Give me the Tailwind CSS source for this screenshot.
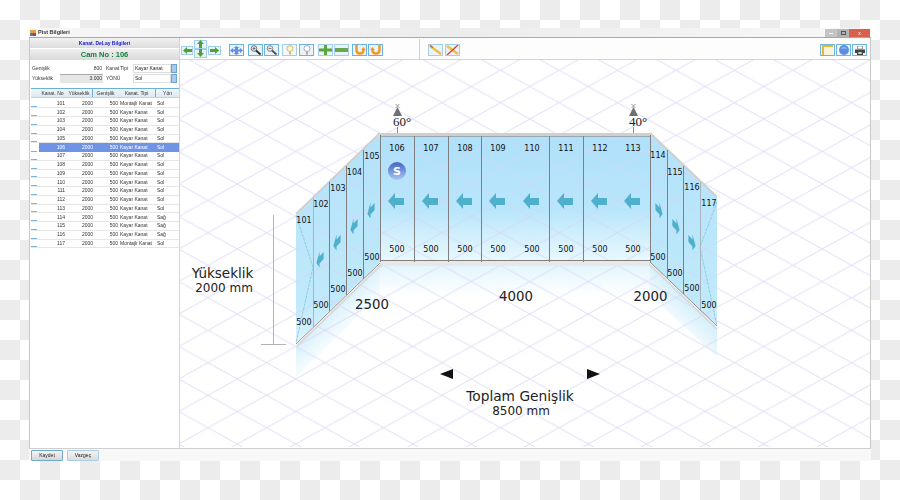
<!DOCTYPE html>
<html lang="en">
  <head>
    <meta charset="UTF-8" />
    <title>Pist Bilgileri</title>
    <script src="https://cdn.jsdelivr.net/npm/@tailwindcss/browser@4"></script>
  </head>
  <body class="w-[900px] h-[500px] overflow-hidden bg-[conic-gradient(#ececec_25%,#fff_0_50%,#ececec_0_75%,#fff_0)] bg-[length:40px_40px] font-['Liberation_Sans',sans-serif]">
    <div class="pt-[28px] pl-[29px]">
      <div class="w-[842px] h-[433px] flex flex-col">
        <!-- title bar -->
        <div class="h-[10px] shrink-0 flex items-center justify-between bg-gradient-to-r from-[#f7f7f7] via-[#ececec] to-[#f8f8f8] border-b border-[#a9a9a9]">
          <div class="flex items-center gap-[2px] pl-[1px] blur-[0.3px]">
            <span class="w-[6px] h-[6px] bg-[conic-gradient(#e5a13a_25%,#c0392b_0_50%,#3b7fc4_0_75%,#e5a13a_0)]"></span>
            <span class="text-[5.5px] font-bold leading-none text-[#333]">Pist Bilgileri</span>
          </div>
          <div class="flex h-[8px] self-start mt-[1px] mr-[1px] blur-[0.3px]">
            <span class="w-[12px] bg-[#c4c4c4] flex items-center justify-center"><span class="w-[4px] h-[1px] bg-white"></span></span>
            <span class="w-[12px] bg-[#b4b4b4] flex items-center justify-center"><span class="w-[5px] h-[4px] border border-[#555]"></span></span>
            <span class="w-[21px] bg-[#d8604c] flex items-center justify-center text-[5px] leading-none text-white">x</span>
          </div>
        </div>
        <div class="flex-1 min-h-0 flex bg-white border-x border-[#c9c9c9]">
          <!-- left panel -->
          <div class="w-[150px] shrink-0 border-r border-[#d4d4d4] blur-[0.35px]">
            <div class="h-[10px] bg-gradient-to-b from-[#f2f2f2] to-[#dcdcdc] flex items-center justify-center text-[5px] font-bold text-[#1a1ad0] leading-none">Kanat. DeLay Bilgileri</div>
            <div class="h-[11px] mt-[1px] bg-gradient-to-b from-[#f0f0f0] to-[#d9d9d9] flex items-center justify-center text-[7.5px] font-bold text-[#0f7f3c] leading-none">Cam No : 106</div>
            <div class="mt-[3px] pl-[2px] text-[5px] leading-none text-[#333]">
              <div class="flex items-center h-[10px]">
                <span class="w-[28px]">Genişlik</span>
                <span class="w-[43px] text-right pr-[1px]">800</span>
                <span class="ml-[3px] w-[27px]">Kanat Tipi</span>
                <span class="w-[38px] h-[9px] flex items-center bg-white border border-[#ddd] pl-[1px] text-[#222]">Kayar Kanat</span>
                <span class="w-[6px] h-[9px] bg-[#a9cbe8] border border-[#6da4d2]"></span>
              </div>
              <div class="flex items-center h-[10px]">
                <span class="w-[28px]">Yükseklik</span>
                <span class="w-[43px] h-[9px] flex items-center justify-end pr-[1px] bg-[#e6e6e6] border-t border-[#aaa]">3.000</span>
                <span class="ml-[3px] w-[27px]">YÖNÜ</span>
                <span class="w-[38px] h-[9px] flex items-center bg-white border border-[#ddd] pl-[1px] text-[#222]">Sol</span>
                <span class="w-[6px] h-[9px] bg-[#a9cbe8] border border-[#6da4d2]"></span>
              </div>
            </div>
            <div class="mt-[5px] ml-[1px] w-[148px] text-[5px] leading-none text-[#333]">
              <div class="flex h-[10px] items-center bg-gradient-to-b from-[#eef5fa] to-[#dde9f2] border-t border-[#6fb0d8] border-b border-b-[#bcd5e6]">
                <span class="w-[8px]"></span>
                <span class="w-[27px] text-center">Kanat. No</span>
                <span class="w-[27px] text-center border-r border-[#6fb0d8] h-full leading-[8px]">Yükseklik</span>
                <span class="w-[25px] text-center">Genişlik</span>
                <span class="w-[38px] text-center border-r border-[#6fb0d8] h-full leading-[8px]">Kanat. Tipi</span>
                <span class="w-[23px] text-center">Yön</span>
              </div>
              <div id="rows" class="mt-[1.5px]"></div>
            </div>
          </div>
          <!-- right side -->
          <div class="flex-1 min-w-0 flex flex-col">
            <div class="h-[22px] shrink-0 flex items-start border-b border-[#d4d4d4] bg-[#fdfdfd] blur-[0.3px]">
              <div class="flex items-center ml-[1px] h-full">
                <button class="w-[12px] h-[9px] mt-[4px] border border-[#a5cfe8] bg-[#e8f2f8] flex items-center justify-center"><svg width="9" height="7" viewBox="0 0 9 7"><path d="M0 3.500 4 0v2h5v3H4v2z" fill="#4da23a"/></svg></button>
                <div class="flex flex-col ml-[1px] mr-[1px]">
                  <button class="w-[13px] h-[9px] border border-[#a5cfe8] bg-[#e8f2f8] flex items-center justify-center"><svg width="7" height="8" viewBox="0 0 7 8"><path d="M3.500 0 7 4H5v4H2V4H0z" fill="#4da23a"/></svg></button>
                  <button class="w-[13px] h-[9px] border border-[#a5cfe8] bg-[#e8f2f8] flex items-center justify-center"><svg width="7" height="8" viewBox="0 0 7 8"><path d="M3.500 8 7 4H5V0H2v4H0z" fill="#4da23a"/></svg></button>
                </div>
                <button class="w-[13px] h-[9px] mt-[4px] border border-[#a5cfe8] bg-[#e8f2f8] flex items-center justify-center"><svg width="9" height="7" viewBox="0 0 9 7"><path d="M9 3.500 5 0v2H0v3h5v2z" fill="#4da23a"/></svg></button>
              </div>
              <div class="flex gap-[3px] ml-[8px] mt-[6px]">
                <button class="w-[15px] h-[12px] border border-[#6db3dc] bg-[#eaf3f9] flex items-center justify-center"><svg width="13" height="9" viewBox="0 0 13 9"><path d="M0 4.500 3 2v1.500h2V2L3.500 2 6.500 0 9.500 2H8v1.500h2V2l3 2.500L10 7V5.500H8V7h1.500l-3 2-3-2H5V5.500H3V7z" fill="#5f8fe0"/></svg></button>
              </div>
              <div class="flex gap-[1px] ml-[4px] mt-[6px]">
                <button class="w-[15px] h-[12px] border border-[#6db3dc] bg-[#eaf3f9] flex items-center justify-center"><svg width="12" height="10" viewBox="0 0 12 10"><circle cx="4" cy="3.500" r="2.800" fill="#dfe8ee" stroke="#777"/><path d="M6 5.500 10.500 9.500" stroke="#333" stroke-width="2"/><path d="M2.500 3.500h3M4 2v3" stroke="#555" stroke-width=".7"/></svg></button>
                <button class="w-[15px] h-[12px] border border-[#6db3dc] bg-[#eaf3f9] flex items-center justify-center"><svg width="12" height="10" viewBox="0 0 12 10"><circle cx="4" cy="3.500" r="2.800" fill="#dfe8ee" stroke="#888"/><path d="M6 5.500 10.500 9.500" stroke="#555" stroke-width="2"/><path d="M2.500 3.500h3" stroke="#555" stroke-width=".7"/></svg></button>
              </div>
              <div class="flex gap-[2px] ml-[3px] mt-[6px]">
                <button class="w-[15px] h-[12px] border border-[#a5cfe8] bg-[#f3f7fa] flex items-center justify-center"><svg width="8" height="10" viewBox="0 0 8 10"><circle cx="4" cy="3.500" r="3" fill="#fff6d5" stroke="#d8b860"/><path d="M3 7h2v2.500H3z" fill="#c9b98a"/></svg></button>
                <button class="w-[15px] h-[12px] border border-[#6db3dc] bg-[#eaf3f9] flex items-center justify-center"><svg width="8" height="10" viewBox="0 0 8 10"><circle cx="4" cy="3.500" r="3" fill="#fff" stroke="#aaa"/><path d="M3 7h2v2.500H3z" fill="#aaa"/></svg></button>
              </div>
              <div class="flex gap-[1px] ml-[4px] mt-[6px]">
                <button class="w-[15px] h-[12px] border border-[#a5cfe8] bg-[#eaf3f9] flex items-center justify-center"><svg width="13" height="10" viewBox="0 0 13 10"><path d="M5 0h3v3.500h5v3H8V10H5V6.500H0v-3h5z" fill="#5aa53c"/></svg></button>
                <button class="w-[15px] h-[12px] border border-[#a5cfe8] bg-[#eaf3f9] flex items-center justify-center"><svg width="13" height="4" viewBox="0 0 13 4"><path d="M0 0h13v4H0z" fill="#6aa84f"/></svg></button>
              </div>
              <div class="flex gap-[1px] ml-[3px] mt-[6px]">
                <button class="w-[15px] h-[12px] border border-[#6db3dc] bg-[#eaf3f9] flex items-center justify-center"><svg width="12" height="10" viewBox="0 0 12 10"><path d="M2.500 0V4.500Q2.500 8.500 6 8.500T9.500 5" fill="none" stroke="#f09a25" stroke-width="2.500"/><path d="M7 5 9.500 2 12 5z" fill="#f09a25"/></svg></button>
                <button class="w-[15px] h-[12px] border border-[#6db3dc] bg-[#eaf3f9] flex items-center justify-center"><svg width="12" height="10" viewBox="0 0 12 10"><path d="M9.500 0V4.500Q9.500 8.500 6 8.500T2.500 5" fill="none" stroke="#f09a25" stroke-width="2.500"/><path d="M0 5 2.500 2 5 5z" fill="#f09a25"/></svg></button>
              </div>
              <div class="w-px h-[20px] bg-[#d0d0d0] ml-[36px] mt-[1px]"></div>
              <div class="flex gap-[2px] ml-[8px] mt-[6px]">
                <button class="w-[15px] h-[12px] border border-[#a5cfe8] bg-[#eaf3f9] flex items-center justify-center"><svg width="13" height="10" viewBox="0 0 13 10"><path d="M1 1 12 9" stroke="#e8c34a" stroke-width="2.500"/><path d="M1 0.500 4 2.500" stroke="#c9672c" stroke-width="1.500"/></svg></button>
                <button class="w-[15px] h-[12px] border border-[#a5cfe8] bg-[#eaf3f9] flex items-center justify-center"><svg width="13" height="10" viewBox="0 0 13 10"><path d="M1 1 12 9" stroke="#e8c34a" stroke-width="2.500"/><path d="M12 0 1 10" stroke="#e53a2a" stroke-width="1.300"/></svg></button>
              </div>
              <div class="flex gap-[1px] ml-auto mr-[3px] mt-[6px]">
                <button class="w-[15px] h-[12px] border border-[#6db3dc] bg-[#f3f7fa] flex items-center justify-center"><svg width="11" height="10" viewBox="0 0 11 10"><path d="M0 0h11v2H2v8H0z" fill="#e2b53c"/><path d="M2 2h9v8H2z" fill="#f7f3dc"/></svg></button>
                <button class="w-[15px] h-[12px] border border-[#6db3dc] bg-[#f3f7fa] flex items-center justify-center"><svg width="10" height="10" viewBox="0 0 10 10"><circle cx="5" cy="5" r="5" fill="#5b8fe0"/><path d="M1.500 3.500q3.500-3 7 0" fill="#a7c6f3"/></svg></button>
                <button class="w-[15px] h-[12px] border border-[#6db3dc] bg-[#f3f7fa] flex items-center justify-center"><svg width="10" height="9" viewBox="0 0 10 9"><path d="M0 3.500h10V7H8v2H2V7H0z" fill="#444"/><path d="M2.500 0h5v3h-5zM3 6h4v2H3z" fill="#fff" stroke="#444" stroke-width=".5"/></svg></button>
              </div>
            </div>
            <!-- drawing canvas -->
            <svg class="block shrink-0 font-['DejaVu_Sans',sans-serif]" width="690" height="387" viewBox="180 61 690 387">
              <defs>
                <pattern id="iso" patternUnits="userSpaceOnUse" x="178.750" y="87.500" width="58.500" height="32.500">
                  <path d="M0 0 58.500 32.500M58.500 0 0 32.500" stroke="#d4d4f8" stroke-width=".8"/>
                </pattern>
                <linearGradient id="glass" gradientUnits="userSpaceOnUse" x1="0" y1="135" x2="0" y2="262">
                  <stop offset="0" stop-color="#aee0fa"/><stop offset=".6" stop-color="#b9e6fb"/><stop offset="1" stop-color="#e9f8fe"/>
                </linearGradient>
                <linearGradient id="wing" gradientUnits="userSpaceOnUse" x1="0" y1="140" x2="0" y2="345">
                  <stop offset="0" stop-color="#b2e2fa"/><stop offset=".8" stop-color="#c0eafb"/><stop offset="1" stop-color="#dcf3fc"/>
                </linearGradient>
                <linearGradient id="floorL" gradientUnits="userSpaceOnUse" x1="330" y1="310" x2="352" y2="332">
                  <stop offset="0" stop-color="#d6f0fb"/><stop offset="1" stop-color="#fff"/>
                </linearGradient>
                <linearGradient id="floorR" gradientUnits="userSpaceOnUse" x1="695" y1="310" x2="673" y2="332">
                  <stop offset="0" stop-color="#d6f0fb"/><stop offset="1" stop-color="#fff"/>
                </linearGradient>
                <linearGradient id="floorM" gradientUnits="userSpaceOnUse" x1="0" y1="266" x2="0" y2="296">
                  <stop offset="0" stop-color="#e2f5fd"/><stop offset="1" stop-color="#fff"/>
                </linearGradient>
                <linearGradient id="badge" x1="0" y1="0" x2="0" y2="1">
                  <stop offset="0" stop-color="#3f63c8"/><stop offset="1" stop-color="#a9c8f2"/>
                </linearGradient>
                <path id="arrow" d="M-8 0-1-8V-3H8V4H-1V8Z" fill="#4fb0cc"/>
              </defs>
              <rect x="180" y="61" width="690" height="387" fill="#fff"/>
              <!-- floor glow -->
              <path d="M296 347 380 266V296L296 378Z" fill="url(#floorL)"/>
              <path d="M380 266H650V296H380Z" fill="url(#floorM)"/>
              <path d="M650 266 717 329V358L650 296Z" fill="url(#floorR)"/>
              <!-- glass -->
              <path d="M380 136H650V262H380Z" fill="url(#glass)"/>
              <path d="M296 216 380 135V263L296 344Z" fill="url(#wing)"/>
              <path d="M650 135 717 199V327L650 263Z" fill="url(#wing)"/>
              <rect x="180" y="61" width="690" height="387" fill="url(#iso)"/>
              <!-- door lines -->
              <path d="M296 216 313 268 296 344M717 203 700 248 717 327" fill="none" stroke="#7fc6dc" stroke-width=".8" stroke-dasharray="3 1"/>
              <!-- frame -->
              <path d="M380 134H650V137H380Z" fill="#cfcfcf"/>
              <path d="M380 137.500H650" stroke="#8f8f8f" stroke-width=".7"/>
              <path d="M380 261.500H650" stroke="#808080" stroke-width="1"/>
              <path d="M380 262H650V267H380Z" fill="#e8e8e8"/>
              <path d="M414.500 137V263M448.500 137V263M481.500 137V263M549.500 137V263M583.500 137V263M380.500 136V263M650.500 136V263" stroke="#808080" stroke-width="1"/>
              <path d="M296 215 380 134" stroke="#cfcfcf" stroke-width="2"/>
              <path d="M650 134 717 198" stroke="#cfcfcf" stroke-width="2"/>
              <path d="M296 345 380 264" stroke="#8f8f8f" stroke-width="1"/>
              <path d="M297 347 382 265" stroke="#dadada" stroke-width="2"/>
              <path d="M650 263 717 327" stroke="#8f8f8f" stroke-width="1"/>
              <path d="M649 265 717 330" stroke="#dadada" stroke-width="2"/>
              <path d="M313.500 199V328" stroke="#a8b4bc" stroke-width="1"/>
              <path d="M329.500 183V312M346.500 167V296M363.500 151V280" stroke="#808080" stroke-width="1"/>
              <path d="M667.500 151V279M683.500 167V295" stroke="#808080" stroke-width="1"/>
              <path d="M700.500 183V311" stroke="#a8b4bc" stroke-width="1"/>
              <!-- arrows -->
              <use href="#arrow" x="396" y="202"/><use href="#arrow" x="430" y="202"/><use href="#arrow" x="464" y="202"/><use href="#arrow" x="497" y="202"/><use href="#arrow" x="531" y="202"/><use href="#arrow" x="565" y="202"/><use href="#arrow" x="599" y="202"/><use href="#arrow" x="632" y="202"/>
              <use href="#arrow" transform="matrix(.45 -.5 0 1 320 260)"/><use href="#arrow" transform="matrix(.45 -.5 0 1 337 243)"/><use href="#arrow" transform="matrix(.45 -.5 0 1 354 227)"/><use href="#arrow" transform="matrix(.45 -.5 0 1 371 211)"/>
              <use href="#arrow" transform="matrix(-.45 -.5 0 1 659 211)"/><use href="#arrow" transform="matrix(-.45 -.5 0 1 676 227)"/><use href="#arrow" transform="matrix(-.45 -.5 0 1 692 243)"/>
              <!-- badge -->
              <circle cx="397" cy="172" r="9" fill="url(#badge)"/>
              <text x="397" y="176" text-anchor="middle" font-size="11" font-weight="bold" fill="#fff">S</text>
              <!-- sprinkler marks -->
              <path d="M397.500 108 393 117H402Z" fill="#707070"/>
              <path d="M395.500 105 399.500 109M399.500 105 395.500 109" stroke="#777" stroke-width=".7"/>
              <path d="M397.500 128V134" stroke="#555" stroke-width=".7"/>
              <text x="402" y="127" text-anchor="middle" font-size="13" font-family="Liberation Serif" fill="#222">60°</text>
              <path d="M633.500 108 629 117H638Z" fill="#707070"/>
              <path d="M631.500 105 635.500 109M635.500 105 631.500 109" stroke="#777" stroke-width=".7"/>
              <path d="M633.500 128V134" stroke="#555" stroke-width=".7"/>
              <text x="638" y="127" text-anchor="middle" font-size="13" font-family="Liberation Serif" fill="#222">40°</text>
              <!-- panel numbers -->
              <g font-size="8" fill="#111" text-anchor="middle">
                <text x="304" y="224">101</text><text x="321" y="208">102</text><text x="338" y="192">103</text><text x="354.500" y="176">104</text><text x="372" y="160">105</text>
                <text x="397" y="151.500">106</text><text x="431" y="151.500">107</text><text x="465" y="151.500">108</text><text x="498" y="151.500">109</text><text x="532" y="151.500">110</text><text x="566" y="151.500">111</text><text x="600" y="151.500">112</text><text x="633" y="151.500">113</text>
                <text x="658" y="159">114</text><text x="675" y="176">115</text><text x="692" y="191">116</text><text x="709" y="207">117</text>
                <text x="304" y="326">500</text><text x="321" y="309">500</text><text x="338" y="293">500</text><text x="355" y="277">500</text><text x="372" y="261">500</text>
                <text x="397" y="253">500</text><text x="431" y="253">500</text><text x="465" y="253">500</text><text x="498" y="253">500</text><text x="532" y="253">500</text><text x="566" y="253">500</text><text x="600" y="253">500</text><text x="633" y="253">500</text>
                <text x="658" y="261">500</text><text x="675" y="277">500</text><text x="692" y="292">500</text><text x="709" y="309">500</text>
              </g>
              <!-- dimensions -->
              <path d="M273.500 216V345M261 345.500H286" stroke="#b5b5b5" stroke-width="1" fill="none"/>
              <g fill="#222" text-anchor="middle">
                <text x="222.500" y="278.500" font-size="13.500">Yükseklik</text>
                <text x="224" y="293" font-size="12">2000 mm</text>
                <text x="372" y="310" font-size="13.300">2500</text>
                <text x="516" y="302" font-size="13.300">4000</text>
                <text x="650.500" y="302" font-size="13.300">2000</text>
                <text x="520" y="402" font-size="13.750">Toplam Genişlik</text>
                <text x="521" y="416" font-size="12">8500 mm</text>
              </g>
              <path d="M440 375 453 370V380ZM600 375 587 370V380Z" fill="#111"/>
            </svg>
          </div>
        </div>
        <!-- footer -->
        <div class="h-[13px] shrink-0 flex items-start gap-[4px] pl-[2px] pt-[1px] bg-[#f8f8f8] border-t border-[#cfcfcf] blur-[0.2px]">
          <button class="w-[32px] h-[11px] border border-[#6fa9d0] rounded-[1px] bg-gradient-to-b from-[#f4f4f4] to-[#d6d6d6] text-[5px] leading-none text-[#222]">Kaydet</button>
          <button class="w-[32px] h-[11px] border border-[#a9cfe6] rounded-[1px] bg-gradient-to-b from-[#f4f4f4] to-[#dcdcdc] text-[5px] leading-none text-[#222]">Vazgeç</button>
        </div>
      </div>
    </div>
    <script>
      const rows = document.getElementById("rows");
      for (let i = 0; i < 17; i++) {
        const no = 101 + i;
        const tip = i === 0 || i === 16 ? "Montajlı Kanat" : "Kayar Kanat";
        const yon = no >= 114 && no <= 116 ? "Sağ" : "Sol";
        const selected = no === 106;
        const row = document.createElement("div");
        row.className = selected
          ? "flex h-[8.75px] items-center bg-[#6f94e6] text-white"
          : "flex h-[8.75px] items-center bg-white border-b border-[#e6e6e6]";
        row.innerHTML = `
          <span class="w-[8px] h-full bg-white flex items-end text-[#333]"><span class="block w-[6px] h-px bg-[#7fb2d6]"></span></span>
          <span class="w-[26px] text-right">${no}</span>
          <span class="w-[28px] text-right">2000</span>
          <span class="w-[25px] text-right">500</span>
          <span class="w-[38px] pl-[2px]">${tip}</span>
          <span class="w-[20px] pl-[1px]">${yon}</span>`;
        rows.appendChild(row);
      }
    </script>
  </body>
</html>
